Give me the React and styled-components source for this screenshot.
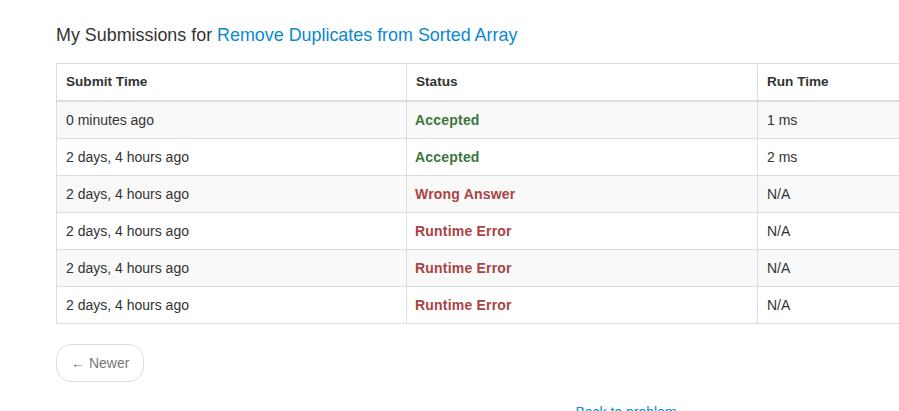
import styled, { createGlobalStyle } from "styled-components";

const GlobalStyle = createGlobalStyle`
    html, body {
        margin: 0;
        padding: 0;
        background: #fff;
        overflow: hidden;
    }
    body {
        font-family: "Liberation Sans", Arial, sans-serif;
        font-size: 14px;
        line-height: 20px;
        color: #333;
    }
`

const Page = styled.div`
    width: 1140px;
    padding: 0 0 0 56px;
`

const Title = styled.h3`
    margin: 24px 0 17px 0;
    font-size: 17.9px;
    font-weight: 400;
    line-height: 22px;
    color: #333;
    a {
        color: #0a88d0;
        text-decoration: none;
    }
`

const Table = styled.table`
    width: 1140px;
    border-collapse: collapse;
    border: 1px solid #ddd;
    th, td {
        text-align: left;
        padding: 8px 8px 8px 9px;
        line-height: 20px;
        border: 1px solid #ddd;
    }
    th {
        font-weight: 700;
        font-size: 13.6px;
        border-bottom-width: 2px;
    }
    tbody tr:nth-child(odd) {
        background: #f9f9f9;
    }
`

const Status = styled.td`
    && {
        font-weight: 700;
        letter-spacing: 0.2px;
        padding-left: 8px;
        color: ${p => (p.$ok ? "#3c763d" : "#a94442")};
    }
`

const Pager = styled.div`
    margin-top: 20px;
`

const PagerButton = styled.a`
    display: inline-block;
    box-sizing: border-box;
    height: 38px;
    padding: 8px 14px;
    border: 1px solid #ddd;
    border-radius: 15px;
    color: #777;
    text-decoration: none;
    background: #fff;
`

const BackLink = styled.div`
    text-align: center;
    margin-top: 20px;
    a {
        color: #0a88d0;
        text-decoration: none;
    }
`

const rows = [
    { time: "0 minutes ago", status: "Accepted", run: "1 ms" },
    { time: "2 days, 4 hours ago", status: "Accepted", run: "2 ms" },
    { time: "2 days, 4 hours ago", status: "Wrong Answer", run: "N/A" },
    { time: "2 days, 4 hours ago", status: "Runtime Error", run: "N/A" },
    { time: "2 days, 4 hours ago", status: "Runtime Error", run: "N/A" },
    { time: "2 days, 4 hours ago", status: "Runtime Error", run: "N/A" },
]

const App = () => {
    return <>
        <GlobalStyle />
        <Page>
            <Title>
                My Submissions for <a href="#">Remove Duplicates from Sorted Array</a>
            </Title>
            <Table>
                <colgroup>
                    <col style={{ width: 350 }} />
                    <col style={{ width: 351 }} />
                    <col style={{ width: 220 }} />
                    <col />
                </colgroup>
                <thead>
                    <tr>
                        <th>Submit Time</th>
                        <th>Status</th>
                        <th>Run Time</th>
                        <th>Language</th>
                    </tr>
                </thead>
                <tbody>
                    {rows.map((row, index) => (
                        <tr key={index}>
                            <td>{row.time}</td>
                            <Status $ok={row.status === "Accepted"}>{row.status}</Status>
                            <td>{row.run}</td>
                            <td>cpp</td>
                        </tr>
                    ))}
                </tbody>
            </Table>
            <Pager>
                <PagerButton href="#">&larr; Newer</PagerButton>
            </Pager>
            <BackLink>
                <a href="#">Back to problem</a>
            </BackLink>
        </Page>
    </>
}

export default App;
